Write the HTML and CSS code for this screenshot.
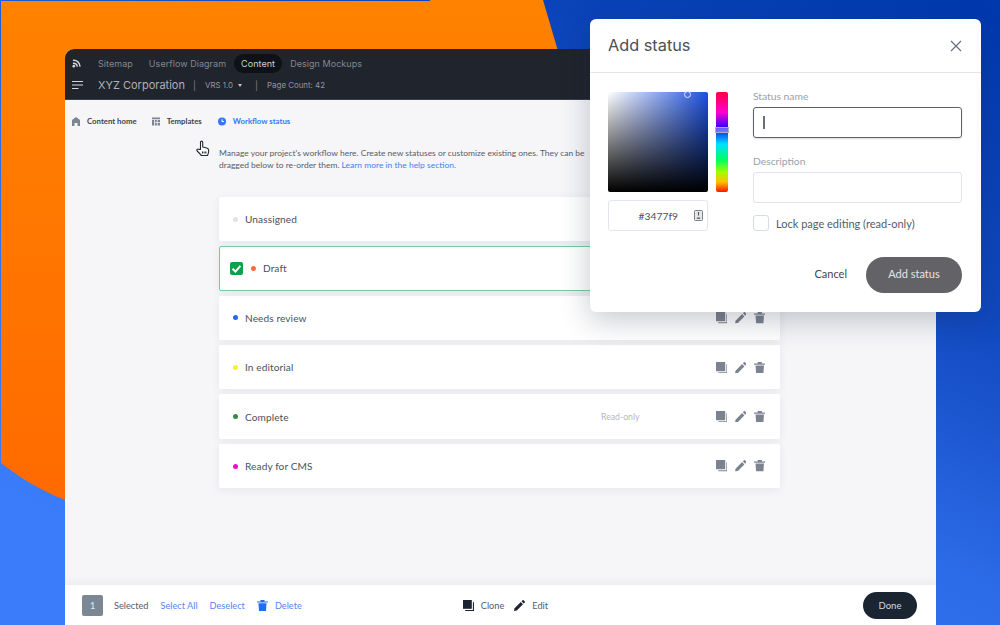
FILE: index.html
```html
<!DOCTYPE html>
<html lang="en">
<head>
<meta charset="utf-8">
<title>Add status</title>
<link rel="stylesheet" href="styles.css">
</head>
<body>
<svg class="sprite" width="0" height="0" aria-hidden="true">
  <symbol id="i-clone" viewBox="0 0 12 12"><path d="M0 0h9.600v9.600H0z"/><path d="M10.800 2.400H12V12H2.400v-1.200h8.400z"/></symbol>
  <symbol id="i-edit" viewBox="0 0 12 12"><path d="M0 12l.6-3L7.400 2.200l2.400 2.400L3 11.400z"/><path d="M8.200 1.400L9.400.2c.3-.3.7-.3 1 0l1.400 1.400c.3.3.3.7 0 1l-1.200 1.200z"/></symbol>
  <symbol id="i-trash" viewBox="0 0 12 12"><path d="M1.600 3.600h8.800l-.6 8.400H2.200z"/><path d="M0 1.600h3.800V.4c0-.2.2-.4.4-.4h3.600c.2 0 .4.2.4.4v1.200H12v1.200H0z"/></symbol>
</svg>

<div class="stage">
  <svg class="blob" viewBox="0 0 1000 625" aria-hidden="true">
    <defs><linearGradient id="orange" x1="0" y1="0" x2="0" y2="1"><stop offset="0" stop-color="#ff8200"/><stop offset="1" stop-color="#ff6a00"/></linearGradient></defs>
    <path fill="url(#orange)" d="M1 1H430V0H543L590 160V500H65C42 491 20 478 1 463Z"/>
  </svg>

  <div class="app">
    <header class="topbar">
      <div class="nav">
        <svg class="logo" viewBox="0 0 10 10"><path d="M1 1.500C5 1 8.500 3.500 9 8.500" fill="none" stroke="#d5d7dc" stroke-width="1.600"/><path d="M1 4.800C3.500 4.600 5.500 6 6 8.500" fill="none" stroke="#d5d7dc" stroke-width="1.600"/><circle cx="2" cy="8" r="1.500" fill="#d5d7dc"/></svg>
        <a class="nav-item nav-first">Sitemap</a>
        <a class="nav-item">Userflow Diagram</a>
        <a class="nav-item nav-active">Content</a>
        <a class="nav-item">Design Mockups</a>
      </div>
      <div class="project">
        <svg class="menu" viewBox="0 0 11 8"><path d="M0 .5h11M0 4h11M0 7.500h6.500" stroke="#d5d7dc" stroke-width="1"/></svg>
        <span class="project-name">XYZ Corporation</span>
        <span class="sep">|</span>
        <span class="project-meta">VRS 1.0</span>
        <span class="caret"></span>
        <span class="sep">|</span>
        <span class="project-meta">Page Count: 42</span>
      </div>
    </header>

    <main class="content">
      <nav class="crumbs">
        <svg class="crumb-icon" viewBox="0 0 8 9"><path d="M4 0l4 3v6H5.500V6h-3v3H0V3z" fill="#7d8590"/></svg>
        <span class="crumb">Content home</span>
        <svg class="crumb-icon crumb-icon-t" viewBox="0 0 8 8"><path d="M0 0h8v1.800H0zM0 2.600h2.200V8H0zM3 2.600h1.800V4.400H3zM5.600 2.600H8V4.400H5.600zM3 5.200h1.800V8H3zM5.600 5.200H8V8H5.600z" fill="#7d8590"/></svg>
        <span class="crumb">Templates</span>
        <svg class="crumb-icon crumb-icon-w" viewBox="0 0 8 8"><circle cx="4" cy="4" r="4" fill="#3477f9"/><path d="M4 1.800V4h2" fill="none" stroke="#fff" stroke-width="1"/></svg>
        <span class="crumb crumb-active">Workflow status</span>
      </nav>

      <p class="intro">Manage your project's workflow here. Create new statuses or customize existing ones. They can be dragged below to re-order them. <a class="link">Learn more in the help section.</a></p>

      <ul class="rows">
        <li class="row"><span class="dot dot-grey"></span><span class="row-name">Unassigned</span>
          <span class="row-tools"><svg class="tool"><use href="#i-clone"/></svg><svg class="tool"><use href="#i-edit"/></svg><svg class="tool"><use href="#i-trash"/></svg></span></li>
        <li class="row row-selected"><span class="check"><svg viewBox="0 0 10 10"><path d="M2 5.200l2.200 2.200L8 3" fill="none" stroke="#fff" stroke-width="1.500"/></svg></span><span class="dot dot-orange"></span><span class="row-name">Draft</span>
          <span class="row-tools"><svg class="tool"><use href="#i-clone"/></svg><svg class="tool"><use href="#i-edit"/></svg><svg class="tool"><use href="#i-trash"/></svg></span></li>
        <li class="row"><span class="dot dot-blue"></span><span class="row-name">Needs review</span>
          <span class="row-tools"><svg class="tool"><use href="#i-clone"/></svg><svg class="tool"><use href="#i-edit"/></svg><svg class="tool"><use href="#i-trash"/></svg></span></li>
        <li class="row"><span class="dot dot-yellow"></span><span class="row-name">In editorial</span>
          <span class="row-tools"><svg class="tool"><use href="#i-clone"/></svg><svg class="tool"><use href="#i-edit"/></svg><svg class="tool"><use href="#i-trash"/></svg></span></li>
        <li class="row"><span class="dot dot-green"></span><span class="row-name">Complete</span><span class="row-note">Read-only</span>
          <span class="row-tools"><svg class="tool"><use href="#i-clone"/></svg><svg class="tool"><use href="#i-edit"/></svg><svg class="tool"><use href="#i-trash"/></svg></span></li>
        <li class="row"><span class="dot dot-pink"></span><span class="row-name">Ready for CMS</span>
          <span class="row-tools"><svg class="tool"><use href="#i-clone"/></svg><svg class="tool"><use href="#i-edit"/></svg><svg class="tool"><use href="#i-trash"/></svg></span></li>
      </ul>
    </main>

    <footer class="actionbar">
      <span class="count">1</span>
      <span class="bar-label">Selected</span>
      <a class="bar-link">Select All</a>
      <a class="bar-link">Deselect</a>
      <svg class="bar-icon bar-icon-blue"><use href="#i-trash"/></svg>
      <a class="bar-link bar-link-tight">Delete</a>
      <svg class="bar-icon bar-icon-clone"><use href="#i-clone"/></svg>
      <span class="bar-label bar-label-tight">Clone</span>
      <svg class="bar-icon bar-icon-edit"><use href="#i-edit"/></svg>
      <span class="bar-label bar-label-tight">Edit</span>
      <button class="done">Done</button>
    </footer>
  </div>

  <svg class="cursor" viewBox="0 0 14 18" aria-hidden="true"><path d="M4.500 9.500V2.200c0-1.500 2.200-1.500 2.200 0V7l4 1c1.500.4 2 1.200 2 2.500 0 2-.5 3.500-1.200 5H5.500L1.200 11c-1-1.200.5-2.600 1.700-1.600z" fill="#fff" stroke="#23272f" stroke-width="1.100" stroke-linejoin="round"/><path d="M6 12.500h5" stroke="#23272f" stroke-width="1.800" stroke-dasharray="1 .6"/></svg>

  <section class="modal">
    <header class="modal-head">
      <h2 class="modal-title">Add status</h2>
      <svg class="close" viewBox="0 0 12 12"><path d="M1 1l10 10M11 1L1 11" stroke="#6b7280" stroke-width="1.300" fill="none"/></svg>
    </header>
    <div class="modal-body">
      <div class="picker">
        <div class="picker-top">
          <div class="sv"><span class="sv-handle"></span></div>
          <div class="hue"><span class="hue-handle"></span></div>
        </div>
        <div class="hex">
          <span class="hex-value">#3477f9</span>
          <svg class="hex-icon" viewBox="0 0 9 11"><rect x=".5" y=".5" width="8" height="10" rx="1" fill="#e8e8ea" stroke="#7b7f86"/><path d="M4.500 2v3.500" stroke="#55585f" stroke-width="1.200"/><path d="M2.800 7.500h3.400v1.300H2.800z" fill="#55585f"/></svg>
        </div>
      </div>
      <form class="fields">
        <label class="field-label">Status name</label>
        <div class="input input-focus"><span class="caret-line"></span></div>
        <label class="field-label field-label-2">Description</label>
        <div class="input"></div>
        <div class="lock"><span class="box"></span><span class="lock-label">Lock page editing (read-only)</span></div>
      </form>
    </div>
    <div class="modal-foot">
      <button class="cancel" type="button">Cancel</button>
      <button class="submit" type="button">Add status</button>
    </div>
  </section>
</div>
</body>
</html>
```

FILE: styles.css
```css
* { box-sizing: border-box; }
html, body { margin: 0; padding: 0; height: 100%; overflow: hidden; }
body { font-family: "Lato", "Liberation Sans", sans-serif; color: #3e4652; }
.sprite { position: absolute; }
.stage {
  position: relative; width: 1000px; height: 625px; overflow: hidden;
  padding: 49px 64px 0 65px;
  background: linear-gradient(205deg, #0038ae 0%, #1149c0 30%, #2d6ce8 55%, #3a7cfa 88%);
}
.blob { position: absolute; left: 0; top: 0; width: 1000px; height: 625px; }

.app {
  position: relative; width: 871px; height: 576px; display: flex; flex-direction: column;
  border-radius: 9px 9px 0 0; overflow: hidden; background: #f6f6f9;
}
.topbar { height: 51px; flex: none; background: #1f242d; border-bottom: 1px solid #3b3e46; padding: 5px 0 0 7px; font-family: "Inter", "Open Sans", sans-serif; }
.nav { display: flex; align-items: center; height: 19px; }
.logo { width: 9px; height: 9px; margin-right: 10px; flex: none; }
.nav-item { font-size: 9px; color: #84878d; padding: 0 7px; line-height: 19px; height: 19px; margin-right: 1px; white-space: nowrap; letter-spacing: .05px; }
.nav-first { margin-right: 2px; }
.nav-active { background: #0e1116; color: #cfd1d4; border-radius: 10px; }
.project { display: flex; align-items: center; height: 16px; margin-top: 4px; white-space: nowrap; }
.menu { width: 11px; height: 8px; margin-right: 15px; flex: none; }
.project-name { font-size: 11px; color: #aeb1b6; width: 89px; }
.sep { font-size: 9px; color: #80838a; margin: 0 9px 0 6px; }
.project-meta { font-size: 7.900px; color: #94979d; }
.caret { width: 0; height: 0; border: 2.500px solid transparent; border-top: 3px solid #c3c5c9; border-bottom: 0; margin: 1px 7px 0 5px; }

.content { flex: 1; min-height: 0; }
.crumbs { display: flex; align-items: center; height: 12px; margin: 15px 0 0 7px; }
.crumb-icon { width: 8px; height: 9px; margin-right: 7px; flex: none; }
.crumb-icon-t { margin-left: 15px; }
.crumb-icon-w { margin-left: 16px; }
.crumb { font-size: 7.800px; font-weight: 700; color: #3c4350; white-space: nowrap; }
.crumb-active { color: #3477f9; }
.intro { width: 375px; margin: 21px 0 0 154px; font-size: 8.470px; line-height: 11.700px; color: #555c68; }
.link { color: #3f7ff5; }

.rows { list-style: none; width: 561px; margin: 25.500px 0 0 154px; padding: 0; display: flex; flex-direction: column; gap: 5px; }
.row {
  height: 44.400px; display: flex; align-items: center; padding: 0 15px 0 14px;
  background: #fff; border-radius: 2px; box-shadow: 0 2px 9px rgba(45, 55, 90, .08);
}
.row-selected { border: 1px solid #6fcf97; padding-left: 10px; }
.check { width: 13px; height: 13px; background: #0ba34a; border-radius: 2px; margin-right: 8px; display: flex; }
.dot { width: 5px; height: 5px; border-radius: 50%; margin-right: 7px; flex: none; }
.dot-grey { background: #dfe2ec; }
.dot-orange { background: #fa6b3c; }
.dot-blue { background: #2468ee; }
.dot-yellow { background: #f7ee3e; }
.dot-green { background: #3b8a44; }
.dot-pink { background: #ec10c8; }
.row-name { font-size: 10.100px; color: #4a515d; letter-spacing: .1px; white-space: nowrap; }
.row-note { margin-left: auto; margin-right: 76px; font-size: 8.700px; color: #b3b8c0; }
.row-tools { display: flex; align-items: center; gap: 7.500px; margin-left: auto; }
.row-note + .row-tools { margin-left: 0; }
.tool { width: 11.500px; height: 11.500px; fill: #7c8390; }

.actionbar {
  position: relative; height: 40px; flex: none; background: #fff; display: flex; align-items: center; padding: 0 19px 0 17px;
  box-shadow: 0 -3px 8px rgba(40, 45, 60, .05); font-size: 9.200px;
}
.count { width: 21px; height: 21px; border-radius: 2px; background: #7c8794; color: #e8eaee; display: flex; align-items: center; justify-content: center; font-size: 9px; margin-right: 11px; }
.bar-label { color: #555c68; margin-right: 12px; white-space: nowrap; }
.bar-label-tight { margin-right: 0; }
.bar-link { color: #4f87f2; margin-right: 12px; white-space: nowrap; }
.bar-link-tight { margin-right: 0; }
.bar-icon { width: 11px; height: 11px; margin-right: 7px; flex: none; }
.bar-icon-blue { fill: #1f6cf5; }
.bar-icon-clone { fill: #1b2430; margin-left: 161px; margin-right: 7px; }
.bar-icon-edit { fill: #1b2430; margin-left: 10px; margin-right: 7px; }
.done {
  margin-left: auto; width: 54px; height: 27px; border: 0; border-radius: 14px; background: #1b2532;
  color: #d6d9de; font: 9.500px "Lato", sans-serif;
}

.cursor { position: absolute; left: 196px; top: 140px; width: 14px; height: 18px; }

.modal {
  position: absolute; left: 590px; top: 19px; width: 391px; height: 293px; background: #fff; border-radius: 6px;
  box-shadow: 0 8px 30px rgba(25, 35, 60, .25);
}
.modal-head { height: 54px; display: flex; align-items: center; justify-content: space-between; padding: 0 19px 1px 18px; border-bottom: 1px solid #e2e4e8; }
.modal-title { margin: 0; font: 400 16.300px "Inter", "Open Sans", sans-serif; color: #4b5058; }
.close { width: 12px; height: 12px; margin-top: 2px; }
.modal-body { display: flex; padding: 19px 19px 0 18px; }
.picker { width: 120px; flex: none; margin-right: 25px; }
.picker-top { display: flex; gap: 8px; }
.sv {
  position: relative; width: 100px; height: 100px; border-radius: 2px;
  background: linear-gradient(to bottom, rgba(0,0,0,0), #000), linear-gradient(to right, #fff, #1c50e0);
}
.sv-handle { position: absolute; left: 76px; top: -1px; width: 7px; height: 7px; border: 1px solid #dfe5f2; border-radius: 50%; }
.hue {
  position: relative; width: 12px; height: 100px; border-radius: 2px;
  background: linear-gradient(to bottom, #ff0040 0%, #ff00d0 20%, #3000ff 36%, #0a40f0 40%, #00e0ff 52%, #00ff60 68%, #a0ff00 80%, #ffc000 90%, #ff1500 100%);
}
.hue-handle { position: absolute; left: -1px; top: 35px; width: 14px; height: 6px; border: 1px solid #a7b0c0; background: rgba(255,255,255,.35); }
.hex { width: 100px; height: 31px; margin-top: 8px; border: 1px solid #e2e6ee; border-radius: 3px; display: flex; align-items: center; justify-content: flex-end; padding-right: 4px; }
.hex-value { font-size: 10.300px; color: #4a4f58; margin-right: 16px; }
.hex-icon { width: 9px; height: 11px; }
.fields { flex: 1; display: flex; flex-direction: column; margin: 0; }
.field-label { font-size: 10.300px; line-height: 8px; color: #9aa0a9; margin-bottom: 7px; }
.field-label-2 { margin-top: 19px; }
.input { height: 31px; border: 1px solid #dfe3ee; border-radius: 3px; display: flex; align-items: center; padding-left: 9px; }
.input-focus { border-color: #5c6068; box-shadow: 0 1px 2px rgba(0,0,0,.15); }
.caret-line { width: 1.500px; height: 13px; background: #6b7078; }
.lock { display: flex; align-items: center; margin-top: 12px; }
.box { width: 16px; height: 16px; border: 1px solid #d5dce6; border-radius: 3px; margin-right: 7px; }
.lock-label { font-size: 11px; color: #555b65; }
.modal-foot { position: absolute; right: 19px; bottom: 19px; display: flex; align-items: center; }
.cancel { border: 0; background: none; font: 11px "Lato", sans-serif; color: #3e4450; padding: 0 0 3px; margin-right: 19px; }
.submit { width: 96px; height: 36px; border: 0; border-radius: 18px; background: #636367; color: #e4e4e6; font: 11px "Lato", sans-serif; padding: 0 0 3px; }
```
